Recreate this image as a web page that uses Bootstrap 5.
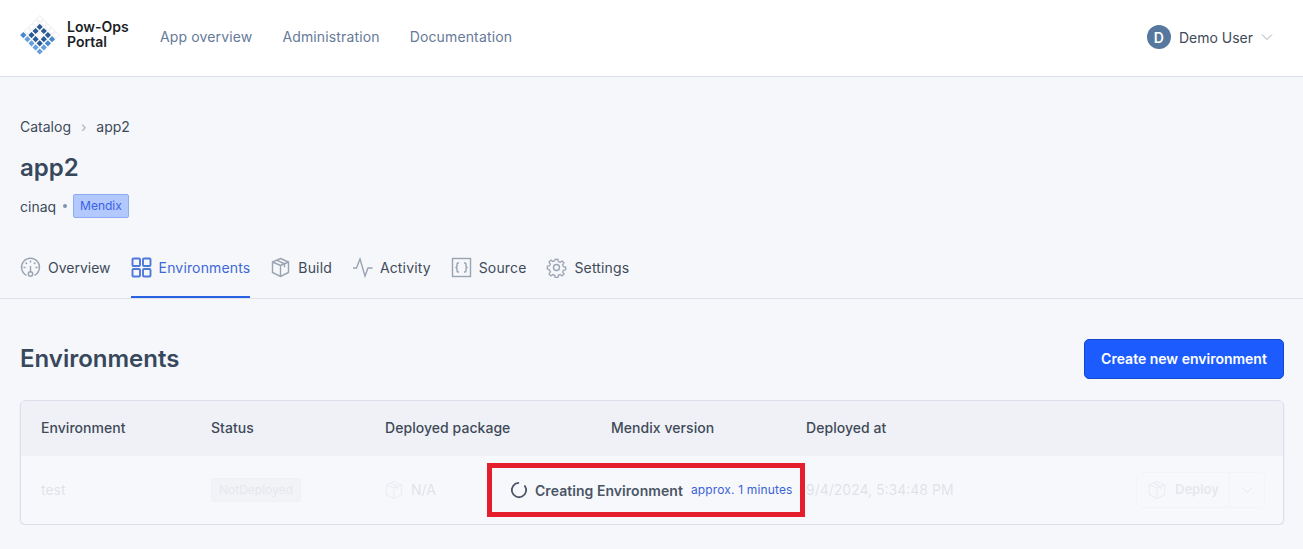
<!DOCTYPE html>
<html lang="en">
<head>
  <meta charset="UTF-8" />
  <meta name="viewport" content="width=device-width, initial-scale=1" />
  <title>Low-Ops Portal</title>
  <link href="https://cdn.jsdelivr.net/npm/bootstrap@5.3.3/dist/css/bootstrap.min.css" rel="stylesheet" />
  <style>
  body { background: #f5f7fb; color: #3b4a5c; font-family: Inter, "Liberation Sans", sans-serif; font-size: 14px; overflow: hidden; }
  .top-bar { height: 77px; background: #fff; border-bottom: 1px solid #d9deec; padding: 0 30px 2px 20px; }
  .logo-mark { width: 40px; height: 42px; margin-right: 7px; margin-bottom: 3px; }
  .logo-mark .w { fill: #fff; stroke: #d5d8de; stroke-width: .5; }
  .logo-mark .d { fill: #2b5a94; }
  .logo-mark .m { fill: #4a86cb; }
  .logo-mark .l { fill: #669fdc; }
  .logo-text { color: #1b1f26; font-size: 14px; font-weight: 600; line-height: 15px; width: 72px; margin-bottom: 6px; }
  .top-bar .nav-link { color: #667a99; font-size: 14px; padding: 0 0 1px; margin-left: 30px; letter-spacing: .14px; }
  .top-bar .nav-link:first-child { margin-left: 21px; }
  .user-dot { width: 24px; height: 24px; background: #56789e; color: #fff; font-size: 14px; font-weight: 600; }
  .user-name { color: #3f4a59; margin-left: 8px; margin-right: 8px; }
  .page-head { padding: 41px 20px 0; }
  .breadcrumb { --bs-breadcrumb-divider: "›"; --bs-breadcrumb-margin-bottom: 0; --bs-breadcrumb-item-padding-x: 10px; --bs-breadcrumb-divider-color: #a9b0bc; line-height: 17px; }
  .breadcrumb a { color: #3f4a59; text-decoration: none; }
  .breadcrumb .active { color: #3f4a59; }
  .app-title { color: #38485c; font-size: 24px; font-weight: 600; line-height: 29px; margin: 18px 0 0; }
  .app-meta { margin-top: 12px; height: 24px; }
  .dot-sep { width: 4px; height: 4px; background: #7d94b0; margin: 0 6px 0 7px; }
  .tag-mendix { background: #b3c8fd; border: 1px solid #8eaaf5; color: #3862e8; font-size: 12px; font-weight: 400; padding: 0 6px; height: 24px; line-height: 22px; border-radius: 2px; }
  .tab-row { margin-top: 26px; border-bottom: 1px solid #dfe2ea; padding: 0 20px; height: 55px; gap: 20px; }
  .tab-row .nav-link { color: #3f4a59; font-size: 14px; letter-spacing: .15px; padding: 14px 0 0; height: 54px; display: flex; align-items: flex-start; gap: 7px; line-height: 20px; border-bottom: 2px solid transparent; }
  .tab-row .nav-link:first-child { letter-spacing: 0; }
  .tab-row .nav-link svg { width: 21px; height: 21px; fill: none; stroke: #9aa3b0; stroke-width: 1.4; flex: none; margin-top: -1px; }
  .tab-row .nav-link.active { color: #3f68d8; border-bottom-color: #2a62e4; }
  .tab-row .nav-link.active svg { stroke: #4f78dc; stroke-width: 1.9; }
  .list-head { padding: 40px 19px 21px 20px; height: 101px; }
  .list-head h2 { color: #38485c; font-size: 24px; font-weight: 600; margin: 0; }
  .btn-create { --bs-btn-bg: #1c5cff; --bs-btn-border-color: #1448c8; --bs-btn-color: #fff; --bs-btn-hover-bg: #1c5cff; --bs-btn-hover-border-color: #1448c8; --bs-btn-hover-color: #fff; width: 200px; height: 40px; font-size: 14px; font-weight: 600; padding: 0 0 2px; border-radius: 5px; }
  .env-box { margin: 0 19px 0 20px; border: 1px solid #dcdfe9; border-radius: 6px; box-shadow: 0 1px 2px rgba(60,70,110,.12); overflow: hidden; background: #f7f8fc; height: 125px; }
  .env-table { margin: 0; table-layout: fixed; --bs-table-bg: transparent; --bs-table-color: #3f4a59; }
  .env-table th { background: #eff1f6; font-size: 14px; font-weight: 500; letter-spacing: .05px; color: #3f4a59; height: 55px; padding: 0 0 2px 20px; vertical-align: middle; border: 0; }
  .env-table td { height: 67px; padding: 0 0 0 20px; vertical-align: middle; border: 0; font-size: 14px; }
  .status-tag { background: #c8ccd6; border: 1px solid #bcc1cc; color: #6b7380; font-size: 12px; font-weight: 400; padding: 0 7px; height: 24px; line-height: 22px; border-radius: 2px; display: inline-block; }
  .box-ico { width: 20px; height: 20px; fill: none; stroke: #9aa3b0; stroke-width: 1.2; }
  .pkg-cell { gap: 7px; margin-left: -1px; }
  .deploy-group { width: 129px; height: 36px; border: 1px solid #d5d8e0; border-radius: 5px; margin-left: auto; margin-right: 18px; color: #6b7480; font-weight: 600; font-size: 13px; }
  .deploy-main { gap: 8px; padding: 0 10px; border-right: 1px solid #d5d8e0; height: 100%; flex: 1; }
  .deploy-caret { width: 35px; }
  .row-cover { top: 55px; left: 0; right: 0; bottom: 0; background: rgba(247,248,252,.87); }
  .creating-box { width: 318px; height: 54px; border: 5px solid #e41e2c; margin-right: 12px; padding-left: 18px; }
  .spin-ico { width: 18px; height: 18px; margin-right: 7px; transform: rotate(25deg); }
  .creating-text { color: #4a5666; font-weight: 600; font-size: 14px; letter-spacing: .05px; }
  .creating-time { color: #3a62d8; font-size: 12px; letter-spacing: .15px; margin-left: 8px; margin-top: -1px; }
  </style>
</head>
<body>

  <svg width="0" height="0" class="position-absolute">
    <symbol id="ico-box" viewBox="0 0 21 21">
      <path d="M10.5 1.5 18.5 5v10.5l-8 4-8-4V5z" />
      <path d="M2.5 5l8 3.5 8-3.5M10.5 8.5v11M6.5 3.2l8 3.6v3.4" />
    </symbol>
    <symbol id="ico-down" viewBox="0 0 12 8">
      <path d="M1 1.5 6 6.5 11 1.5" fill="none" stroke-width="1" />
    </symbol>
  </svg>

  <!-- Top bar -->
  <nav class="top-bar d-flex align-items-center">
    <svg class="logo-mark" viewBox="0 0 40 42">
      <g transform="translate(19.7 3.7) rotate(45)">
        <g transform="translate(-2.2 -2.2)">
          <rect class="w" x="0" y="0" width="4.4" height="4.4" />
          <rect class="w" x="5.8" y="0" width="4.4" height="4.4" />
          <rect class="w" x="11.6" y="0" width="4.4" height="4.4" />
          <rect class="w" x="17.4" y="0" width="4.4" height="4.4" />
          <rect class="w" x="23.2" y="0" width="4.4" height="4.4" />
          <rect class="w" x="0" y="5.8" width="4.4" height="4.4" />
          <rect class="d" x="5.8" y="5.8" width="4.4" height="4.4" />
          <rect class="d" x="11.6" y="5.8" width="4.4" height="4.4" />
          <rect class="d" x="17.4" y="5.8" width="4.4" height="4.4" />
          <rect class="m" x="23.2" y="5.8" width="4.4" height="4.4" />
          <rect class="w" x="0" y="11.6" width="4.4" height="4.4" />
          <rect class="d" x="5.8" y="11.6" width="4.4" height="4.4" />
          <rect class="w" x="11.6" y="11.6" width="4.4" height="4.4" />
          <rect class="d" x="17.4" y="11.6" width="4.4" height="4.4" />
          <rect class="m" x="23.2" y="11.6" width="4.4" height="4.4" />
          <rect class="w" x="0" y="17.4" width="4.4" height="4.4" />
          <rect class="d" x="5.8" y="17.4" width="4.4" height="4.4" />
          <rect class="d" x="11.6" y="17.4" width="4.4" height="4.4" />
          <rect class="d" x="17.4" y="17.4" width="4.4" height="4.4" />
          <rect class="l" x="23.2" y="17.4" width="4.4" height="4.4" />
          <rect class="m" x="0" y="23.2" width="4.4" height="4.4" />
          <rect class="l" x="5.8" y="23.2" width="4.4" height="4.4" />
          <rect class="l" x="11.6" y="23.2" width="4.4" height="4.4" />
          <rect class="l" x="17.4" y="23.2" width="4.4" height="4.4" />
          <rect class="l" x="23.2" y="23.2" width="4.4" height="4.4" />
        </g>
      </g>
    </svg>
    <div class="logo-text">Low-Ops Portal</div>
    <div class="nav">
      <a class="nav-link" href="#">App overview</a>
      <a class="nav-link" href="#">Administration</a>
      <a class="nav-link" href="#">Documentation</a>
    </div>
    <div class="d-flex align-items-center ms-auto">
      <span class="user-dot rounded-circle d-flex align-items-center justify-content-center">D</span>
      <span class="user-name">Demo User</span>
      <svg width="12" height="8" stroke="#a3aab5"><use href="#ico-down" /></svg>
    </div>
  </nav>

  <!-- Page header -->
  <div class="page-head">
    <ol class="breadcrumb">
      <li class="breadcrumb-item"><a href="#">Catalog</a></li>
      <li class="breadcrumb-item active">app2</li>
    </ol>
    <h1 class="app-title">app2</h1>
    <div class="app-meta d-flex align-items-center">
      <span>cinaq</span>
      <span class="dot-sep rounded-circle"></span>
      <span class="tag-mendix">Mendix</span>
    </div>
  </div>

  <!-- Tabs -->
  <div class="tab-row nav">
    <a class="nav-link" href="#">
      <svg viewBox="0 0 21 21"><path d="M6.5 18.3a9 9 0 1 1 8 0" /><circle cx="10.5" cy="17" r="2.2" /><path d="M10.5 14.8V9M3.5 10.5h2M15.5 10.5h2M5.6 5.6 7 7M15.4 5.6 14 7M10.5 3.5v2" /></svg>
      Overview
    </a>
    <a class="nav-link active" href="#">
      <svg viewBox="0 0 21 21"><rect x="1.5" y="1.5" width="7.5" height="7.5" rx="1" /><rect x="12" y="1.5" width="7.5" height="7.5" rx="1" /><rect x="1.5" y="12" width="7.5" height="7.5" rx="1" /><rect x="12" y="12" width="7.5" height="7.5" rx="1" /></svg>
      Environments
    </a>
    <a class="nav-link" href="#"><svg><use href="#ico-box" /></svg>Build</a>
    <a class="nav-link" href="#">
      <svg viewBox="0 0 21 21"><path d="M1 11h3.5l3.5-9 5 17 3-8h4.5" /></svg>
      Activity
    </a>
    <a class="nav-link" href="#">
      <svg viewBox="0 0 21 21"><rect x="1.5" y="1.5" width="18" height="18" /><path d="M8 6H7a1 1 0 0 0-1 1v2.5l-1 1 1 1V14a1 1 0 0 0 1 1h1M13 6h1a1 1 0 0 1 1 1v2.5l1 1-1 1V14a1 1 0 0 1-1 1h-1" /></svg>
      Source
    </a>
    <a class="nav-link" href="#">
      <svg viewBox="0 0 21 21"><circle cx="10.5" cy="10.5" r="3" /><path d="M9 1.5h3l.5 2.6 1.9.8 2.2-1.5 2.1 2.1-1.5 2.2.8 1.9 2.5.4v3l-2.5.5-.8 1.9 1.5 2.2-2.1 2.1-2.2-1.5-1.9.8-.5 2.4H9l-.5-2.4-1.9-.8-2.2 1.5-2.1-2.1 1.5-2.2-.8-1.9L.5 12V9L3 8.6l.8-1.9-1.5-2.2 2.1-2.1 2.2 1.5 1.9-.8z" transform="translate(.9 .9) scale(.915)" /></svg>
      Settings
    </a>
  </div>

  <!-- Environments -->
  <div class="list-head d-flex justify-content-between align-items-center">
    <h2>Environments</h2>
    <button class="btn btn-create" type="button">Create new environment</button>
  </div>

  <div class="env-box position-relative">
    <table class="table env-table">
      <colgroup>
        <col style="width: 170px" />
        <col style="width: 174px" />
        <col style="width: 226px" />
        <col style="width: 195px" />
        <col style="width: 310px" />
        <col />
      </colgroup>
      <thead>
        <tr>
          <th>Environment</th>
          <th>Status</th>
          <th>Deployed package</th>
          <th>Mendix version</th>
          <th>Deployed at</th>
          <th></th>
        </tr>
      </thead>
      <tbody>
        <tr>
          <td>test</td>
          <td><span class="status-tag">NotDeployed</span></td>
          <td>
            <span class="pkg-cell d-flex align-items-center"><svg class="box-ico"><use href="#ico-box" /></svg>N/A</span>
          </td>
          <td></td>
          <td>9/4/2024, 5:34:48 PM</td>
          <td>
            <div class="deploy-group d-flex align-items-center">
              <span class="deploy-main d-flex align-items-center"><svg class="box-ico"><use href="#ico-box" /></svg>Deploy</span>
              <span class="deploy-caret d-flex justify-content-center"><svg width="12" height="8" stroke="#6b7480"><use href="#ico-down" /></svg></span>
            </div>
          </td>
        </tr>
      </tbody>
    </table>
    <!-- Overlay while the environment is being created -->
    <div class="row-cover position-absolute d-flex align-items-center justify-content-center">
      <div class="creating-box d-flex align-items-center">
        <svg class="spin-ico" viewBox="0 0 20 20"><path d="M6 3.1a8 8 0 1 0 8 0" fill="none" stroke="#4a5666" stroke-width="2" stroke-linecap="round" /></svg>
        <span class="creating-text">Creating Environment</span>
        <span class="creating-time">approx. 1 minutes</span>
      </div>
    </div>
  </div>

  <script src="https://cdn.jsdelivr.net/npm/bootstrap@5.3.3/dist/js/bootstrap.bundle.min.js"></script>
</body>
</html>
